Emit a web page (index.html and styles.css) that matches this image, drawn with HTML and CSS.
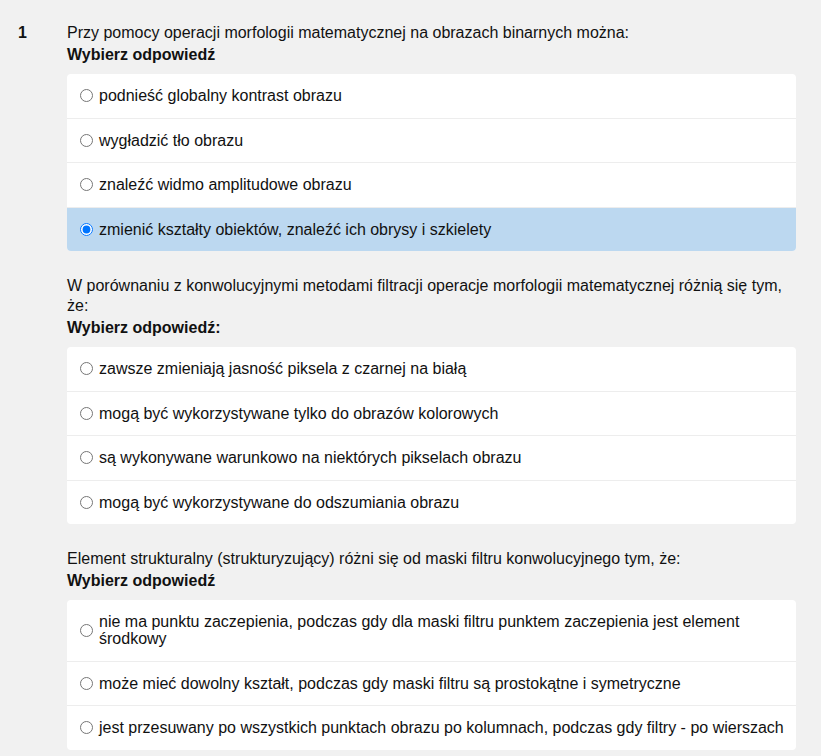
FILE: index.html
```html
<!DOCTYPE html>
<html lang="pl">
<head>
<meta charset="utf-8">
<title>Pytanie 1</title>
<link rel="stylesheet" href="styles.css">
</head>
<body>
<div class="question">
  <div class="qno">1</div>
  <div class="qbody">
    <div class="part">
      <div class="qtext">Przy pomocy operacji morfologii matematycznej na obrazach binarnych można:</div>
      <div class="prompt">Wybierz odpowiedź</div>
      <div class="answers">
        <label class="opt"><input type="radio" name="a1"><span>podnieść globalny kontrast obrazu</span></label>
        <label class="opt"><input type="radio" name="a1"><span>wygładzić tło obrazu</span></label>
        <label class="opt"><input type="radio" name="a1"><span>znaleźć widmo amplitudowe obrazu</span></label>
        <label class="opt selected"><input type="radio" name="a1" checked><span>zmienić kształty obiektów, znaleźć ich obrysy i szkielety</span></label>
      </div>
    </div>
    <div class="part">
      <div class="qtext">W porównaniu z konwolucyjnymi metodami filtracji operacje morfologii matematycznej różnią się tym, że:</div>
      <div class="prompt">Wybierz odpowiedź:</div>
      <div class="answers">
        <label class="opt"><input type="radio" name="a2"><span>zawsze zmieniają jasność piksela z czarnej na białą</span></label>
        <label class="opt"><input type="radio" name="a2"><span>mogą być wykorzystywane tylko do obrazów kolorowych</span></label>
        <label class="opt"><input type="radio" name="a2"><span>są wykonywane warunkowo na niektórych pikselach obrazu</span></label>
        <label class="opt"><input type="radio" name="a2"><span>mogą być wykorzystywane do odszumiania obrazu</span></label>
      </div>
    </div>
    <div class="part">
      <div class="qtext">Element strukturalny (strukturyzujący) różni się od maski filtru konwolucyjnego tym, że:</div>
      <div class="prompt">Wybierz odpowiedź</div>
      <div class="answers">
        <label class="opt"><input type="radio" name="a3"><span>nie ma punktu zaczepienia, podczas gdy dla maski filtru punktem zaczepienia jest element środkowy</span></label>
        <label class="opt"><input type="radio" name="a3"><span>może mieć dowolny kształt, podczas gdy maski filtru są prostokątne i symetryczne</span></label>
        <label class="opt"><input type="radio" name="a3"><span>jest przesuwany po wszystkich punktach obrazu po kolumnach, podczas gdy filtry - po wierszach</span></label>
      </div>
    </div>
  </div>
</div>
</body>
</html>
```
FILE: styles.css
```css
html, body {
  margin: 0;
  padding: 0;
  background: #f1f1f1;
}
body {
  font-family: "Liberation Sans", Arial, sans-serif;
  font-size: 16px;
  color: #111;
  overflow: hidden;
}
.question {
  display: grid;
  grid-template-columns: 67px 729px;
  padding-top: 23px;
}
.qno {
  font-weight: bold;
  padding-left: 18px;
  line-height: 20px;
}
.part {
  margin-bottom: 25px;
}
.qtext {
  line-height: 20px;
}
.prompt {
  font-weight: bold;
  line-height: 20px;
  margin-top: 2px;
}
.answers {
  margin-top: 9px;
  background: #fff;
  border-radius: 4px;
  overflow: hidden;
}
.opt {
  display: flex;
  align-items: center;
  padding: 13px 8px 13.5px 13px;
  line-height: 17px;
  border-top: 1px solid #ededed;
}
.opt:first-child {
  border-top: none;
}
.opt.selected {
  background: #bcd8f0;
}
.opt input {
  margin: 0 6px 0 0;
  width: 13px;
  height: 13px;
  flex: none;
}
```
